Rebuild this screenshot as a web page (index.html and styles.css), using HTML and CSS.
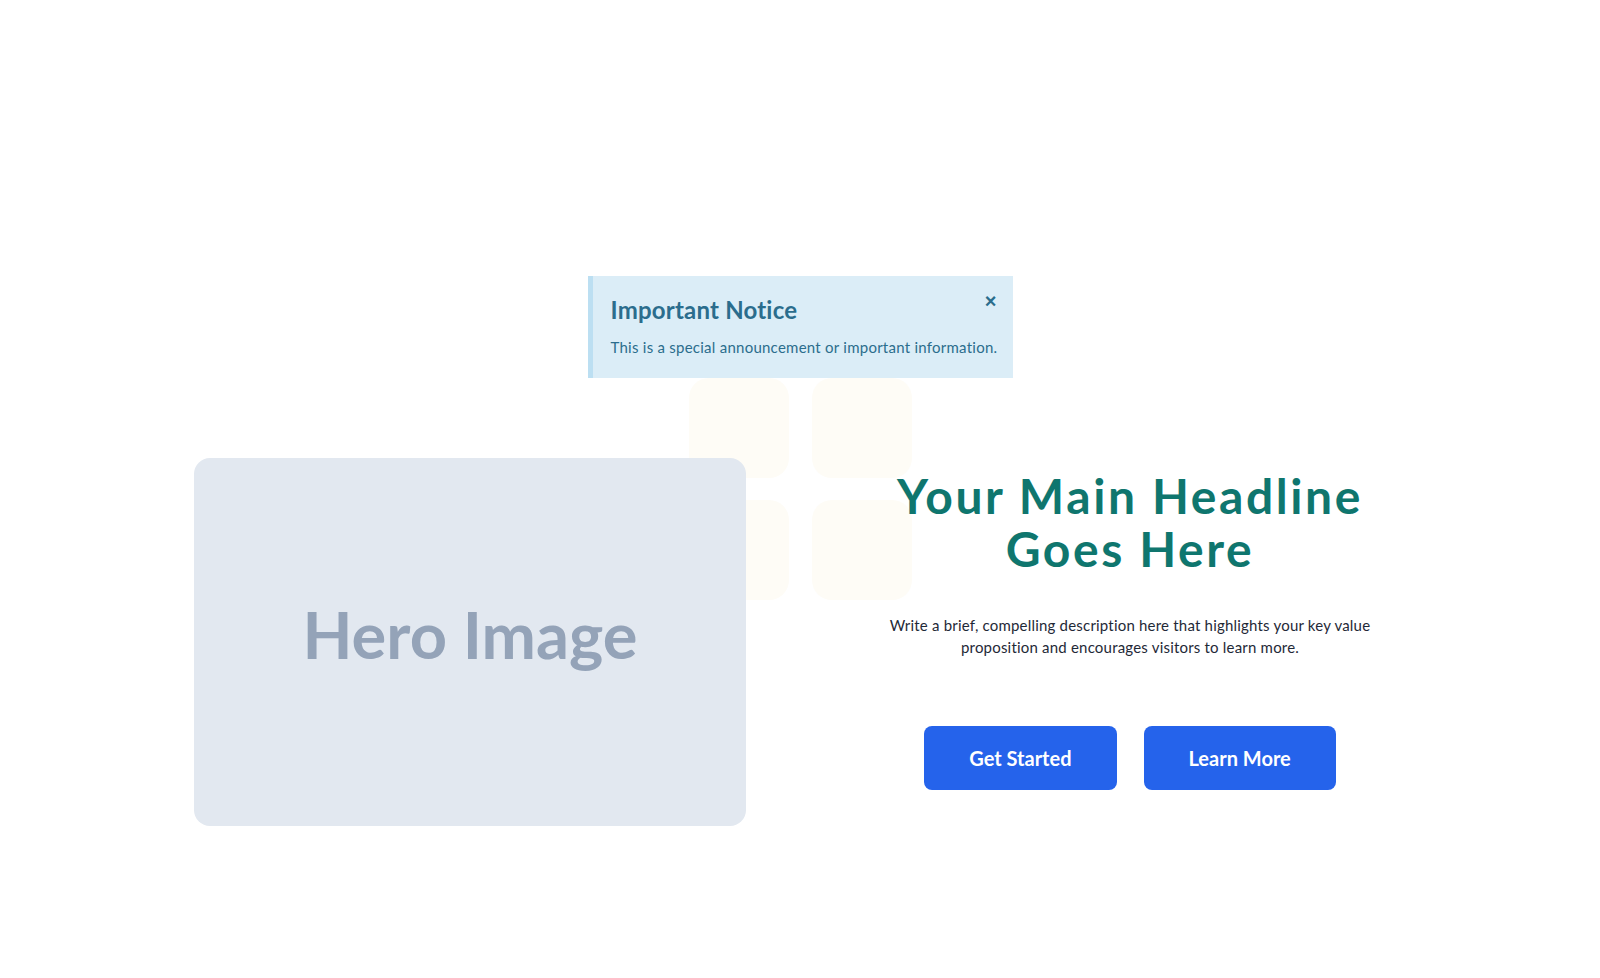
FILE: index.html
```html
<!DOCTYPE html>
<html lang="en">
<head>
    <meta charset="UTF-8">
    <meta name="viewport" content="width=device-width, initial-scale=1.0">
    <title>Landing</title>
    <link rel="stylesheet" href="styles.css">
</head>
<body>
    <div class="page">
        <div class="notice">
            <button class="notice-close" aria-label="Close">&times;</button>
            <h3 class="notice-title">Important Notice</h3>
            <p class="notice-text">This is a special announcement or important information.</p>
        </div>

        <div class="decor">
            <span></span><span></span><span></span><span></span>
        </div>

        <section class="hero">
            <div class="hero-image">Hero Image</div>
            <div class="hero-content">
                <h1>Your Main Headline Goes Here</h1>
                <p class="hero-desc">Write a brief, compelling description here that highlights your key value proposition and encourages visitors to learn more.</p>
                <div class="hero-actions">
                    <a href="#" class="btn">Get Started</a>
                    <a href="#" class="btn">Learn More</a>
                </div>
            </div>
        </section>
    </div>
</body>
</html>
```

FILE: styles.css
```css
body {
    font-family: Lato, "Noto Sans", sans-serif;
    background-color: #fff;
    color: #1f2937;
    margin: 0;
    padding: 0;
}
.page {
    position: relative;
    min-height: 978px;
    padding-top: 276px;
    box-sizing: border-box;
}
.notice {
    position: relative;
    z-index: 2;
    width: 425px;
    box-sizing: border-box;
    margin: 0 auto;
    padding: 19px 16px 21px 18px;
    background-color: #dbedf7;
    border-left: 5px solid #bcdff2;
    color: #2b6d8d;
}
.notice-title {
    margin: 0;
    font-size: 24px;
    line-height: 30px;
    font-weight: 700;
    letter-spacing: 0.2px;
}
.notice-text {
    margin: 12px 0 0;
    font-size: 15px;
    line-height: 20px;
    letter-spacing: 0.25px;
    white-space: nowrap;
}
.notice-close {
    position: absolute;
    top: 15px;
    right: 16px;
    background: none;
    border: none;
    padding: 0;
    color: #2b6d8d;
    font-size: 20px;
    font-weight: 700;
    line-height: 20px;
    cursor: pointer;
}
.decor {
    position: absolute;
    top: 378px;
    left: 50%;
    margin-left: -111px;
    display: grid;
    grid-template-columns: 100px 100px;
    grid-auto-rows: 100px;
    gap: 22px 23px;
    z-index: 0;
}
.decor span {
    background-color: #fefcf6;
    border-radius: 20px;
}
.hero {
    position: relative;
    z-index: 1;
    display: grid;
    grid-template-columns: 552px 552px;
    justify-content: center;
    gap: 108px;
    align-items: center;
    margin-top: 80px;
}
.hero-image {
    height: 368px;
    box-sizing: border-box;
    padding-bottom: 16px;
    background-color: #e2e8f0;
    border-radius: 16px;
    display: flex;
    align-items: center;
    justify-content: center;
    color: #94a3b8;
    font-size: 65px;
    font-weight: 700;
}
.hero-content {
    text-align: center;
    margin-top: -26px;
}
.hero-content h1 {
    margin: 0 auto;
    max-width: 520px;
    font-size: 48px;
    line-height: 53px;
    font-weight: 700;
    letter-spacing: 2.6px;
    color: #0f766e;
}
.hero-desc {
    margin: 39px auto 0;
    max-width: 490px;
    font-size: 15px;
    line-height: 22px;
    letter-spacing: 0.2px;
    color: #1f2937;
}
.hero-actions {
    display: flex;
    justify-content: center;
    gap: 27px;
    margin-top: 68px;
}
.btn {
    display: flex;
    align-items: center;
    justify-content: center;
    height: 64px;
    padding: 0 45px;
    background-color: #2563eb;
    color: #fff;
    border-radius: 8px;
    font-size: 20px;
    font-weight: 700;
    text-decoration: none;
}
.btn:hover {
    background-color: #1d4ed8;
}
```
